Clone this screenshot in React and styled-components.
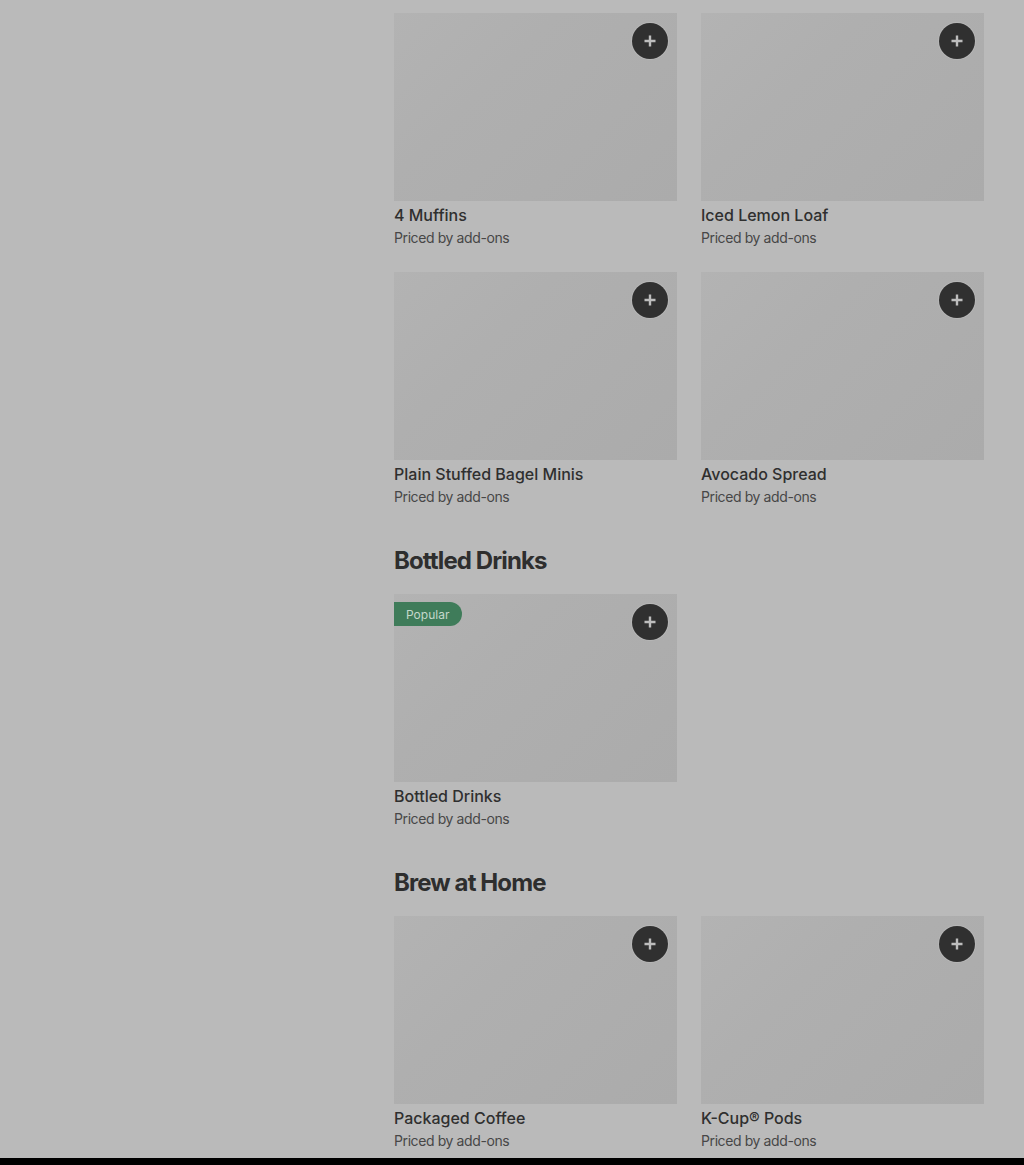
import React from "react";
import styled, { createGlobalStyle } from "styled-components";

const GlobalStyle = createGlobalStyle`
  html, body {
    margin: 0;
    padding: 0;
    background: #bababa;
  }
  body {
    font-family: Inter, "Liberation Sans", sans-serif;
    color: #2f2f2f;
  }
`;

const Page = styled.div`
  display: grid;
  grid-template-columns: 1fr 590px;
  padding: 13px 40px 0 0;
`;

const Sidebar = styled.aside``;

const Main = styled.main`
  display: flex;
  flex-direction: column;
`;

const Section = styled.section`
  display: flex;
  flex-direction: column;
`;

const SectionTitle = styled.h2`
  margin: 38px 0 17px;
  font-size: 24px;
  line-height: 32px;
  font-weight: 700;
  letter-spacing: -0.9px;
  color: #2e2e2e;
`;

const Grid = styled.div`
  display: grid;
  grid-template-columns: 1fr 1fr;
  column-gap: 24px;
  row-gap: 24px;
`;

const Card = styled.div`
  display: flex;
  flex-direction: column;
`;

const Thumb = styled.div`
  position: relative;
  height: 188px;
  background: linear-gradient(135deg, #b3b3b3 0%, #afafaf 35%, #ababab 100%);
`;

const AddButton = styled.button`
  position: absolute;
  top: 10px;
  right: 9px;
  width: 36px;
  height: 36px;
  border-radius: 50%;
  border: none;
  padding: 0;
  background: #303030;
  box-shadow: 0 0 0 1px rgba(200, 200, 200, 0.35);
  display: flex;
  align-items: center;
  justify-content: center;
`;

const Badge = styled.span`
  position: absolute;
  top: 8px;
  left: 0;
  height: 24px;
  padding: 0 13px 0 12px;
  display: flex;
  align-items: center;
  border-radius: 0 12px 12px 0;
  background: #3f7c5a;
  color: #c4d8cb;
  font-size: 12px;
`;

const Name = styled.div`
  margin-top: 4px;
  font-size: 16px;
  line-height: 20px;
  font-weight: 500;
  color: #2f2f2f;
`;

const Price = styled.div`
  margin-top: 3px;
  font-size: 14px;
  line-height: 20px;
  letter-spacing: -0.4px;
  color: #474747;
`;

const BottomBar = styled.div`
  margin-top: 7px;
  height: 7px;
  background: #000;
`;

function PlusIcon() {
  return (
    <svg width="14" height="14" viewBox="0 0 14 14">
      <path d="M7 1.5v11M1.5 7h11" stroke="#bdbdbd" strokeWidth="2.4" />
    </svg>
  );
}

function Item({ name, popular }) {
  return (
    <Card>
      <Thumb>
        {popular && <Badge>Popular</Badge>}
        <AddButton aria-label="Add">
          <PlusIcon />
        </AddButton>
      </Thumb>
      <Name>{name}</Name>
      <Price>Priced by add-ons</Price>
    </Card>
  );
}

const sections = [
  { items: [{ name: "4 Muffins" }, { name: "Iced Lemon Loaf" }, { name: "Plain Stuffed Bagel Minis" }, { name: "Avocado Spread" }] },
  { title: "Bottled Drinks", items: [{ name: "Bottled Drinks", popular: true }] },
  { title: "Brew at Home", items: [{ name: "Packaged Coffee" }, { name: "K-Cup® Pods" }] },
];

export default function App() {
  return (
    <>
      <GlobalStyle />
      <Page>
        <Sidebar />
        <Main>
          {sections.map((s, i) => (
            <Section key={i}>
              {s.title && <SectionTitle>{s.title}</SectionTitle>}
              <Grid>
                {s.items.map((it) => (
                  <Item key={it.name} {...it} />
                ))}
              </Grid>
            </Section>
          ))}
        </Main>
      </Page>
      <BottomBar />
    </>
  );
}
